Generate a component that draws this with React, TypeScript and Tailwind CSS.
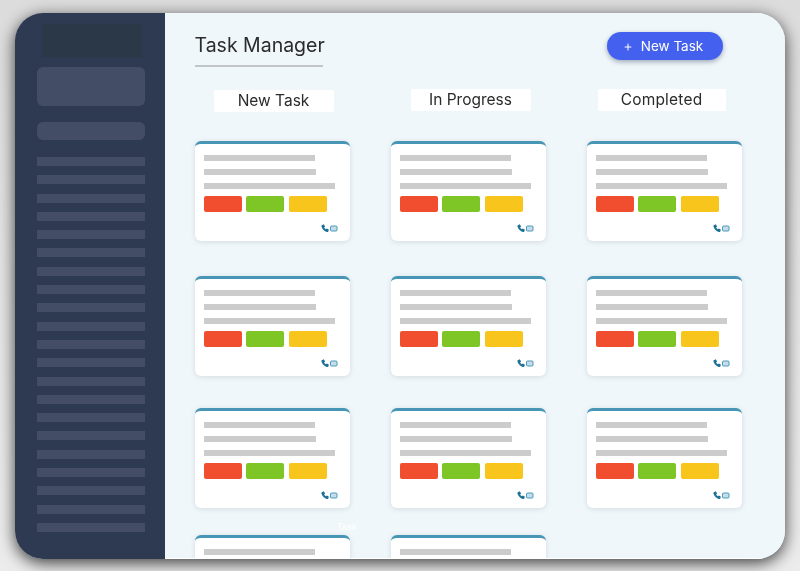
import { Plus } from 'lucide-react';

const navRows = Array.from({ length: 21 }, (_, i) => i);

const columns = [
  { title: 'New Task', chip: 'ml-[19px] mt-[1px] w-[120px]', count: 4 },
  { title: 'In Progress', chip: 'ml-[20px] w-[120px]', count: 4 },
  { title: 'Completed', chip: 'ml-[11px] w-[128px] tracking-[0.2px]', count: 3 },
];

const rowGaps = ['mt-[30px]', 'mt-[35px]', 'mt-[32px]', 'mt-[27px]'];

function ContactIcon() {
  return (
    <svg viewBox="0 0 17 9" className="h-[9px] w-[17px]">
      <path
        d="M.8 1.300 2.800.3l1.300 2.300-1 .9c.4.8 1 1.400 1.800 1.800l1-.9 2 1.300-.6 1.800c-.2.5-.8.7-1.400.5C3.300 7.200 1.300 5.200.5 2.700.3 2.100.4 1.500.8 1.300Z"
        fill="#1f7196"
      />
      <rect x="9.500" y="2" width="6.500" height="5" rx="1" fill="#c4dde9" stroke="#4b9abb" strokeWidth="1" />
    </svg>
  );
}

function TaskCard({ className }: { className: string }) {
  return (
    <div className={`h-[100px] rounded-[6px] border-t-[3px] border-[#4896b6] bg-white px-[9.500px] pt-[11px] shadow-[0_1px_5px_rgba(120,140,155,0.25)] ${className}`}>
      <div className="h-[6px] w-[111px] bg-[#cccccc]" />
      <div className="mt-[8px] h-[6px] w-[112px] bg-[#cccccc]" />
      <div className="mt-[8px] h-[6px] w-[131px] bg-[#cccccc]" />
      <div className="mt-[7px] flex gap-[4.300px]">
        <div className="h-[16px] w-[38px] rounded-[2px] bg-[#f04e2e]" />
        <div className="h-[16px] w-[38px] rounded-[2px] bg-[#7ec626]" />
        <div className="h-[16px] w-[38px] rounded-[2px] bg-[#f7c51c]" />
      </div>
      <div className="mt-[12px] flex justify-end pr-[2.500px]">
        <ContactIcon />
      </div>
    </div>
  );
}

export default function App() {
  return (
    <div className="h-[571px] w-[800px] overflow-hidden bg-gradient-to-b from-[#dcdcdc] to-[#ececec] pl-[15px] pt-[13px] font-['Inter',sans-serif] blur-[0.4px]">
      <div className="relative flex h-[546px] w-[770px] overflow-hidden rounded-[28px] shadow-[0_4px_16px_rgba(0,0,0,0.75)]">
        <aside className="flex w-[150px] shrink-0 flex-col bg-[#2d3a52] pl-[22px] pt-[11px]">
          <div className="ml-[5px] h-[33px] w-[100px] bg-[#2b3848]" />
          <div className="mt-[10px] h-[39px] w-[108px] rounded-[6px] bg-[#434e66]" />
          <div className="mt-[16px] h-[18px] w-[108px] rounded-[6px] bg-[#434e66]" />
          <div className="mt-[17px] flex flex-col gap-[9.300px]">
            {navRows.map((row) => (
              <div key={row} className="h-[9px] w-[108px] bg-[#434e66]" />
            ))}
          </div>
        </aside>

        <main className="flex-1 overflow-hidden border-b border-white bg-[#f0f7fa] pl-[29.500px]">
          <header className="flex items-start justify-between pr-[62px] pt-[19px]">
            <div className="w-[128px] border-b-2 border-[#c2c6c9] pb-[8px]">
              <h1 className="mt-[1px] whitespace-nowrap text-[19.500px] leading-[24px] text-[#2b2b2b]">Task Manager</h1>
            </div>
            <button className="flex h-[28px] w-[116px] items-center justify-center gap-[8px] rounded-full bg-[#4361ee] pr-[4px] pt-[1px] text-[13.500px] text-white shadow-[0_2px_5px_rgba(40,50,90,0.4)]">
              <Plus size={10} strokeWidth={2.500} />
              New Task
            </button>
          </header>

          <div className="mt-[22px] grid grid-cols-[155px_155px_155px] gap-x-[41px]">
            {columns.map((column) => (
              <section key={column.title}>
                <div className={`flex h-[22px] items-center justify-center rounded-[2px] bg-white text-[15.500px] text-[#2b2b2b] ${column.chip}`}>
                  {column.title}
                </div>
                {Array.from({ length: column.count }, (_, i) => (
                  <TaskCard key={i} className={column.title === 'New Task' && i === 0 ? 'mt-[29px]' : rowGaps[i]} />
                ))}
              </section>
            ))}
          </div>
        </main>

        <span className="absolute left-[322px] top-[507px] text-[9px] text-white">Task</span>
      </div>
    </div>
  );
}
